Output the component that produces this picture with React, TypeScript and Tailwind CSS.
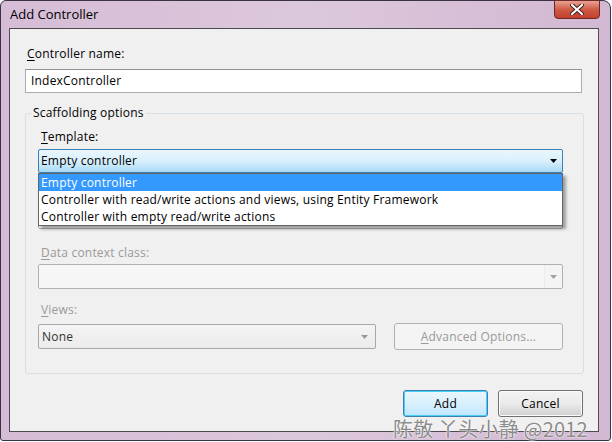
import React from "react";

// Win7-style "Add Controller" dialog with the Template dropdown open
const templates = [
  "Empty controller",
  "Controller with read/write actions and views, using Entity Framework",
  "Controller with empty read/write actions",
];

const Arrow = ({ color = "#000000" }: { color?: string }) => (
  <svg width="7" height="4" viewBox="0 0 7 4">
    <path d="M0 0h7L3.5 4z" fill={color} />
  </svg>
);

const App: React.FC = () => {
  return (
    <div className="relative w-[612px] h-[442px] overflow-hidden bg-white font-['Open_Sans','Noto_Sans',sans-serif] text-[12px] leading-[16px] tracking-[0.2px] text-black">
      <div className="w-[611px] h-[441px] border border-[#3b3340] rounded-tl-[6px] rounded-tr-[8px] rounded-b-[3px] bg-gradient-to-r from-[#d6bcd6] via-[#dcc8dc] to-[#d2b8d2] flex flex-col pl-[8px] pr-[11px] pb-[8px]">
        {/* title bar */}
        <div className="h-[27px] flex items-start relative">
          <span className="mt-[5px] ml-[1px] text-[13px] leading-[17px] tracking-normal">Add Controller</span>
          <div className="absolute right-[-1px] top-[-1px] w-[46px] h-[19px] rounded-b-[4px] border border-[#6b2a24] bg-gradient-to-b from-[#e8a194] via-[#cf5a45] to-[#c2402c] flex items-center justify-center">
            <svg width="14" height="11" viewBox="0 0 14 11">
              <path d="M2 1l10 9M12 1L2 10" stroke="#3c1a16" strokeWidth="4" strokeLinecap="round" />
              <path d="M2 1l10 9M12 1L2 10" stroke="#ffffff" strokeWidth="2.2" strokeLinecap="round" />
            </svg>
          </div>
        </div>

        {/* client area */}
        <div className="flex-1 border border-[#4f4a52] bg-[#f0f0f0] flex flex-col pl-[15px] pr-[16px]">
          <label className="mt-[17px] ml-[2px]">
            <u className="underline-offset-2">C</u>ontroller name:
          </label>
          <div className="mt-[7px] h-[24px] border border-[#abadb3] border-t-[#8f9296] bg-white flex items-center px-[5px]">
            IndexController
          </div>

          <fieldset className="mt-[12px] mr-[-2px] border border-[#d5dfe5] rounded-[3px] pl-[12px] pr-[20px] pb-[23px]">
            <legend className="-ml-[7px] px-[2px]">Scaffolding options</legend>

            <div className="mt-[8px] ml-[3px]">
              <u className="underline-offset-2">T</u>emplate:
            </div>
            <div className="relative mt-[4px]">
              <div className="h-[24px] border border-[#3c7fb1] rounded-[2px] bg-gradient-to-b from-[#eaf6fd] via-[#d9f0fc] to-[#a7d9f5] flex items-center justify-between pl-[1px] pr-[5px]">
                <span className="px-[1px]">Empty controller</span>
                <Arrow />
              </div>
              {/* open dropdown list */}
              <div className="absolute left-0 top-full w-[525px] border border-[#646464] bg-white shadow-[3px_3px_3px_rgba(0,0,0,0.35)] z-10">
                {templates.map((t, i) => (
                  <div
                    key={t}
                    className={`h-[17px] flex items-center px-[2px] ${i === 0 ? "bg-[#3399ff] text-white" : ""}`}
                  >
                    {t}
                  </div>
                ))}
              </div>
            </div>

            {/* model class row, hidden behind the list */}
            <div className="mt-[12px] h-[16px]" />
            <div className="mt-[4px] h-[24px] border border-[#adb2b5] rounded-[2px] bg-[#f4f4f4]" />

            <div className="mt-[16px] ml-[3px] text-[#9a9a9a]">
              <u className="underline-offset-2">D</u>ata context class:
            </div>
            <div className="mt-[3px] h-[25px] border border-[#adb2b5] rounded-[2px] bg-[#f4f4f4] flex items-center justify-end pr-[5px]">
              <div className="flex-1 h-full border-r border-[#ececec] bg-[#f6f6f6] mr-[5px]" />
              <Arrow color="#a0a0a0" />
            </div>

            <div className="mt-[13px] ml-[3px] text-[#9a9a9a]">
              <u className="underline-offset-2">V</u>iews:
            </div>
            <div className="mt-[6px] flex items-start gap-[18px]">
              <div className="w-[338px] h-[25px] border border-[#a8a8a8] rounded-[2px] bg-gradient-to-b from-[#f4f4f4] to-[#ebebeb] flex items-center justify-between pl-[3px] pr-[7px] text-[#333333]">
                <span>None</span>
                <Arrow color="#9a9a9a" />
              </div>
              <div className="w-[169px] h-[27px] -mt-[1px] border border-[#adb2b5] rounded-[3px] bg-[#f4f4f4] flex items-center justify-center text-[#9a9a9a]">
                <span>
                  <u className="underline-offset-2">A</u>dvanced Options...
                </span>
              </div>
            </div>
          </fieldset>

          <div className="mt-[16px] flex justify-end gap-[10px] mr-[-1px]">
            <button className="w-[85px] h-[27px] border border-[#3c7fb1] rounded-[3px] bg-gradient-to-b from-[#eaf6fd] via-[#d9f0fc] to-[#bee6fd] shadow-[inset_0_0_0_1px_#48d0f8]">
              Add
            </button>
            <button className="w-[85px] h-[27px] border border-[#707070] rounded-[3px] bg-gradient-to-b from-[#f2f2f2] via-[#ebebeb] to-[#cfcfcf] shadow-[inset_0_0_0_1px_#fcfcfc]">
              Cancel
            </button>
          </div>
        </div>
      </div>

      {/* watermark */}
      <div className="absolute left-[393px] top-[418px] whitespace-nowrap font-['Noto_Sans_CJK_SC',sans-serif] text-[20px] leading-[22px] text-[#8c8c8c] [text-shadow:0_0_2px_#ffffff,0_0_1px_#ffffff]">
        陈敬 丫头小静 @2012
      </div>
    </div>
  );
};

export default App;
